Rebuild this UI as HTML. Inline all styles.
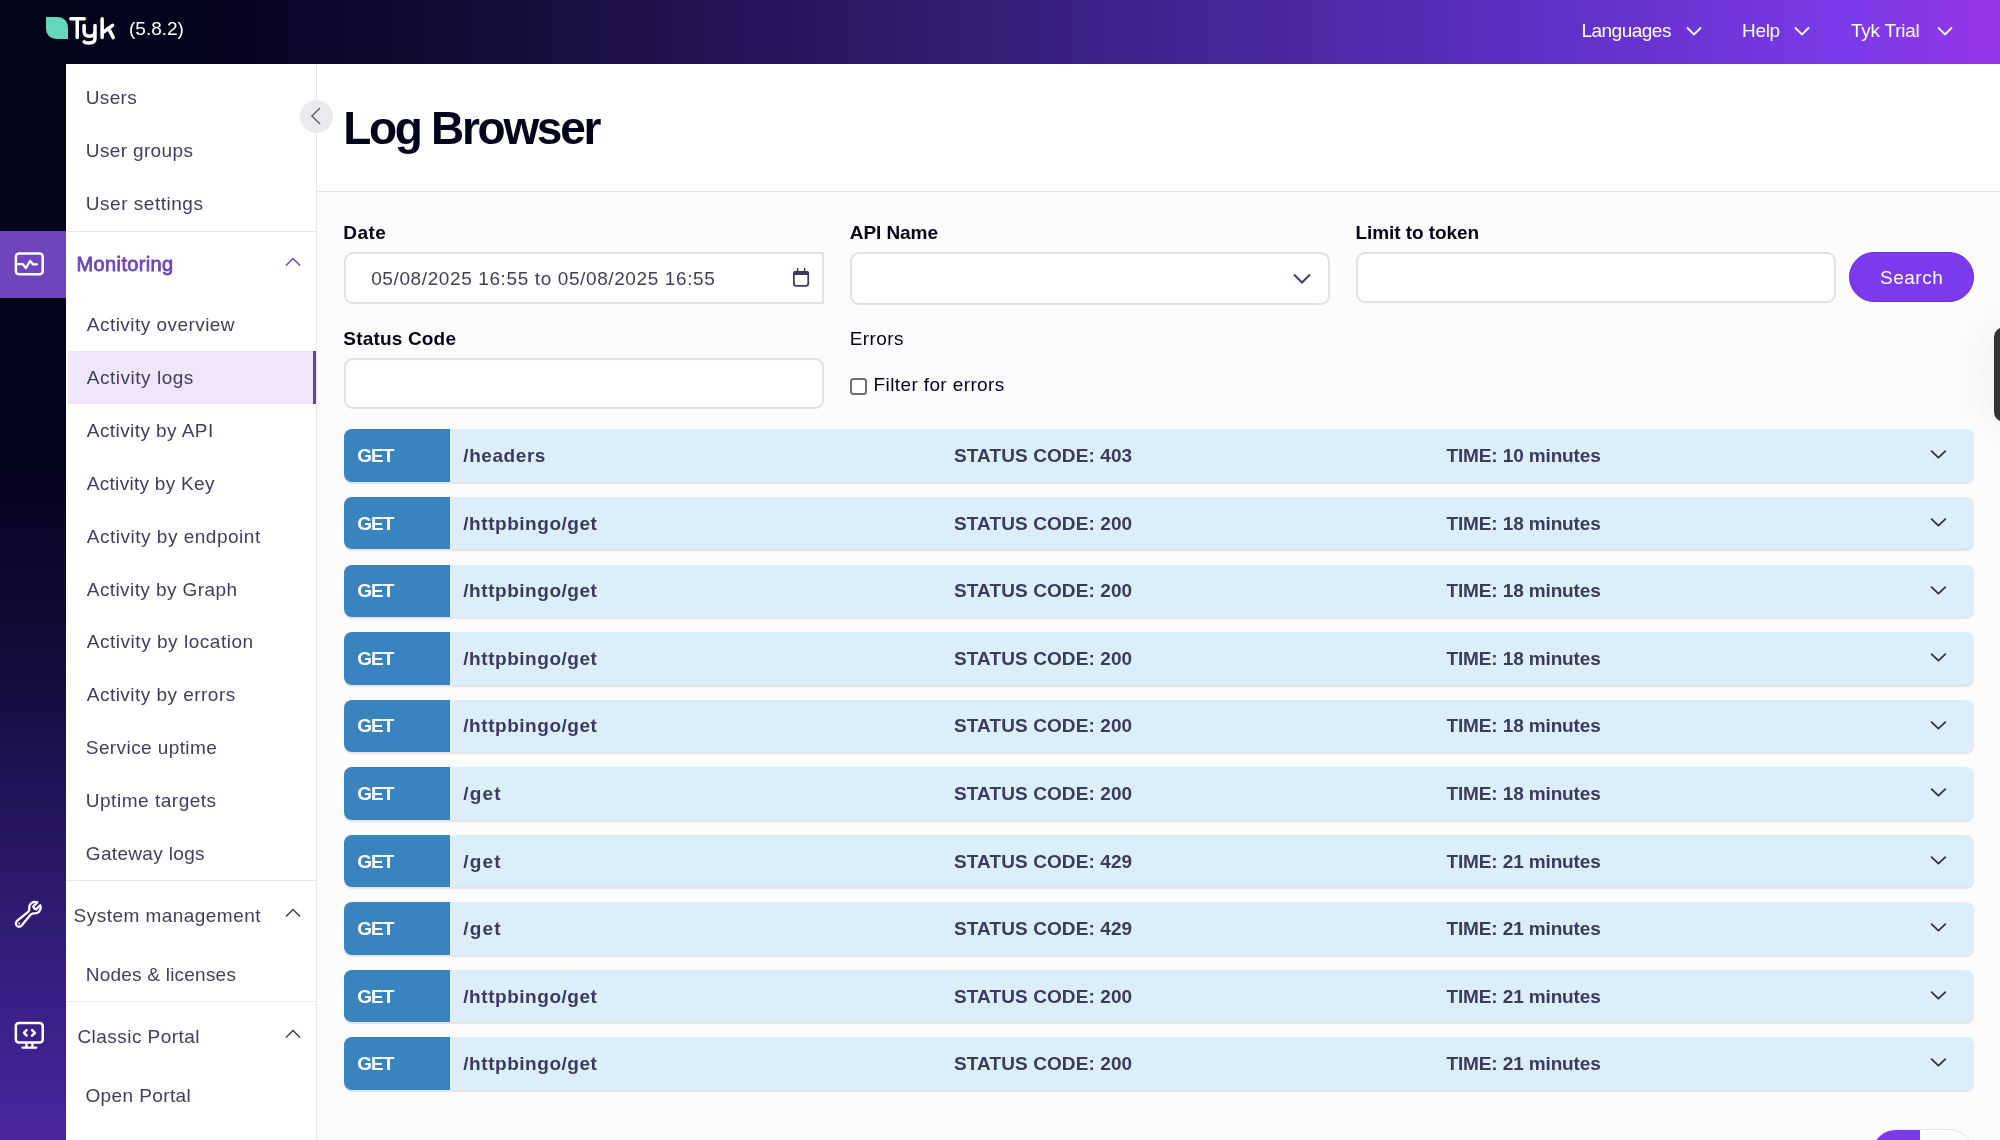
<!DOCTYPE html>
<html><head><meta charset="utf-8">
<style>
*{box-sizing:border-box;margin:0;padding:0}
html,body{width:2000px;height:1140px;overflow:hidden;background:#fcfcfd;font-family:"Liberation Sans",sans-serif}
.a{position:absolute;white-space:nowrap;line-height:1}
#tx{position:absolute;left:0;top:0;width:2000px;height:1140px;will-change:transform}
#top{position:absolute;left:0;top:0;width:2000px;height:64px;background:linear-gradient(90deg,#03031a 0%,#04031c 9%,#1b1044 30%,#391f7e 52%,#5a2fbf 75%,#7a3ae8 92%,#9535e8 100%)}
#rail{position:absolute;left:0;top:64px;width:66px;height:1076px;background:linear-gradient(180deg,#03031a 0%,#04031c 36%,#160d40 58%,#2b1a6c 76%,#4a26a0 100%)}
#side{position:absolute;left:66px;top:64px;width:251px;height:1076px;background:#fff;border-right:1.5px solid #e6e6ec}
.dv{position:absolute;left:68px;width:248px;height:1px;background:#e8e8ee}
#hdr{position:absolute;left:317px;top:64px;width:1683px;height:128px;background:#fff;border-bottom:1.5px solid #e2e2e8}
.inp{position:absolute;background:#fff;border:2px solid #e1e0e7;border-radius:9px}
.row{position:absolute;left:344px;width:1630px;height:52.5px;background:#dbeefa;border-radius:8px;box-shadow:0 1.5px 1px rgba(60,60,90,.13);overflow:hidden}
.row .b{position:absolute;left:0;top:0;width:106px;height:100%;background:#3983bf}
</style></head><body>
<div id="top"></div>
<div class="a" style="left:46px;top:17px;width:22px;height:22px;background:#64d6b9;border-radius:0 10px 0 10px"></div>
<svg class="a" style="left:64px;top:12px" width="56" height="38" viewBox="64 12 56 38"><g fill="none" stroke="#fff" stroke-width="3.5" stroke-linecap="round" stroke-linejoin="round"><path d="M70.8 18.8 H84.3 M77.25 18.8 V37.4"/><path d="M84.1 25.5 V31.2 C84.1 34.6 86.2 36.2 89.5 36.2 C92.6 36.2 95 34.6 95 31.2 M95 25.5 V38.5 C95 41.7 92.6 43 89.2 43 C86.8 43 85 42.4 84.2 41.8"/><path d="M102.15 18.8 V37.5 M103.5 32 L112.6 25.3 M109.2 29.6 L113.2 37.6"/></g></svg>
<svg class="a" style="left:1686px;top:26px" width="16" height="10" viewBox="0 0 16 10"><path d="M1 1.5 L8 8.5 L15 1.5" fill="none" stroke="#fff" stroke-width="1.8"/></svg>
<svg class="a" style="left:1794px;top:26px" width="16" height="10" viewBox="0 0 16 10"><path d="M1 1.5 L8 8.5 L15 1.5" fill="none" stroke="#fff" stroke-width="1.8"/></svg>
<svg class="a" style="left:1937px;top:26px" width="16" height="10" viewBox="0 0 16 10"><path d="M1 1.5 L8 8.5 L15 1.5" fill="none" stroke="#fff" stroke-width="1.8"/></svg>
<div id="rail"></div>
<div class="a" style="left:0;top:231px;width:66px;height:67px;background:#6f45bd"></div>
<svg class="a" style="left:13px;top:251px" width="33" height="26" viewBox="0 0 33 26"><rect x="2.9" y="2.6" width="26.8" height="20.6" rx="3" fill="none" stroke="#fff" stroke-width="2.5"/><path d="M3 13.2 H9.8 L12.9 17 L17.2 9.9 L19.9 13.3 H24" fill="none" stroke="#fff" stroke-width="2.3" stroke-linejoin="round" stroke-linecap="round"/></svg>
<svg class="a" style="left:12.5px;top:899.1px" width="30.6" height="30.6" viewBox="0 0 24 24"><path d="M21.75 6.75a4.5 4.5 0 01-4.884 4.484c-1.076-.091-2.264.071-2.95.904l-7.152 8.684a2.548 2.548 0 11-3.586-3.586l8.684-7.152c.833-.686.995-1.874.904-2.95a4.5 4.5 0 016.336-4.486l-3.276 3.276a3.004 3.004 0 002.25 2.25l3.276-3.276c.256.565.398 1.192.398 1.852z" fill="none" stroke="#fff" stroke-width="1.8" stroke-linecap="round" stroke-linejoin="round"/><path d="M4.867 19.125h.008v.008h-.008v-.008z" stroke="#fff" stroke-width="1.2"/></svg>
<svg class="a" style="left:13px;top:1021px" width="33" height="30" viewBox="0 0 33 30"><rect x="2.85" y="2.05" width="26.9" height="19.5" rx="3" fill="none" stroke="#fff" stroke-width="2.5"/><path d="M13.6 9.2 L11 11.9 L13.6 14.6 M19.1 9.2 L21.9 11.9 L19.1 14.6" fill="none" stroke="#fff" stroke-width="2.5" stroke-linecap="round" stroke-linejoin="round"/><path d="M13.4 22 V26 M19.4 22 V26" fill="none" stroke="#fff" stroke-width="2.4"/><path d="M9.6 26.6 H23.1" fill="none" stroke="#fff" stroke-width="2.4" stroke-linecap="round"/></svg>
<div id="side"></div>
<div class="dv" style="top:230.5px;left:68px;width:248px"></div>
<div class="dv" style="top:880px;left:66px;width:250px"></div>
<div class="dv" style="top:1001px;left:66px;width:250px"></div>
<div class="a" style="left:68px;top:351px;width:248px;height:52.5px;background:#efe6fa;border-right:3px solid #6342ad"></div>
<svg class="a" style="left:285px;top:257px" width="16" height="10" viewBox="0 0 16 10"><path d="M1 8.5 L8 1.5 L15 8.5" fill="none" stroke="#6d45bb" stroke-width="1.5"/></svg>
<svg class="a" style="left:285px;top:908px" width="16" height="10" viewBox="0 0 16 10"><path d="M1 8.5 L8 1.5 L15 8.5" fill="none" stroke="#3e3f5a" stroke-width="1.5"/></svg>
<svg class="a" style="left:285px;top:1029px" width="16" height="10" viewBox="0 0 16 10"><path d="M1 8.5 L8 1.5 L15 8.5" fill="none" stroke="#3e3f5a" stroke-width="1.5"/></svg>
<div id="hdr"></div>
<div class="a" style="left:300px;top:100px;width:33px;height:33px;border-radius:50%;background:#ebebef"></div>
<svg class="a" style="left:309px;top:106px" width="14" height="20" viewBox="0 0 14 20"><path d="M11 2 L3 10 L11 18" fill="none" stroke="#6a6a72" stroke-width="1.6"/></svg>
<div class="inp" style="left:344px;top:252px;width:480px;height:52px;border-radius:9px 0 0 9px"></div>
<svg class="a" style="left:792px;top:267px" width="19" height="21" viewBox="0 0 19 21"><rect x="1.875" y="4.8" width="14.35" height="14.05" rx="2.3" fill="none" stroke="#3b3b58" stroke-width="1.75"/><path d="M1 8.1 V6.3 A2.4 2.4 0 0 1 3.4 3.9 H14.7 A2.4 2.4 0 0 1 17.1 6.3 V8.1 Z" fill="#3b3b58"/><path d="M5.6 1.6 V4.5 M12.6 1.6 V4.5" stroke="#3b3b58" stroke-width="1.5" stroke-linecap="round"/></svg>
<div class="inp" style="left:850px;top:252px;width:480px;height:53px"></div>
<svg class="a" style="left:1293px;top:273px" width="18" height="12" viewBox="0 0 18 12"><path d="M1 1.5 L9 9.5 L17 1.5" fill="none" stroke="#3e3f5a" stroke-width="2"/></svg>
<div class="inp" style="left:1356px;top:252px;width:480px;height:51px"></div>
<div class="a" style="left:1849px;top:252px;width:125px;height:50px;border-radius:25px;background:#7c3aed;border:1px solid #6b30d8"></div>
<div class="inp" style="left:344px;top:358px;width:480px;height:51px"></div>
<div class="a" style="left:850px;top:378px;width:17px;height:17px;border:2px solid #6e6e76;border-radius:3.5px;background:#fff"></div>
<div class="a" style="left:1871px;top:1129px;width:103px;height:50px;border-radius:25px;background:#fff;border:1.5px solid #e6e6eb;overflow:hidden"><div style="position:absolute;left:-1.5px;top:-1.5px;width:49.5px;height:52px;background:#7c3aed"></div></div>
<div class="a" style="left:1994px;top:327px;width:20px;height:95px;border-radius:10px;background:#333;box-shadow:0 0 45px 6px rgba(0,0,0,.07)"></div>
<div class="row" style="top:429.40px"><div class="b"></div></div>
<svg class="a" style="left:1930px;top:449.4px" width="17" height="11" viewBox="0 0 17 11"><path d="M1.6 2.1 L8.4 8.7 L15.3 2.1" fill="none" stroke="#2d3047" stroke-width="1.75" stroke-linecap="round" stroke-linejoin="round"/></svg>
<div class="row" style="top:496.95px"><div class="b"></div></div>
<svg class="a" style="left:1930px;top:517.0px" width="17" height="11" viewBox="0 0 17 11"><path d="M1.6 2.1 L8.4 8.7 L15.3 2.1" fill="none" stroke="#2d3047" stroke-width="1.75" stroke-linecap="round" stroke-linejoin="round"/></svg>
<div class="row" style="top:564.50px"><div class="b"></div></div>
<svg class="a" style="left:1930px;top:584.5px" width="17" height="11" viewBox="0 0 17 11"><path d="M1.6 2.1 L8.4 8.7 L15.3 2.1" fill="none" stroke="#2d3047" stroke-width="1.75" stroke-linecap="round" stroke-linejoin="round"/></svg>
<div class="row" style="top:632.05px"><div class="b"></div></div>
<svg class="a" style="left:1930px;top:652.0px" width="17" height="11" viewBox="0 0 17 11"><path d="M1.6 2.1 L8.4 8.7 L15.3 2.1" fill="none" stroke="#2d3047" stroke-width="1.75" stroke-linecap="round" stroke-linejoin="round"/></svg>
<div class="row" style="top:699.60px"><div class="b"></div></div>
<svg class="a" style="left:1930px;top:719.6px" width="17" height="11" viewBox="0 0 17 11"><path d="M1.6 2.1 L8.4 8.7 L15.3 2.1" fill="none" stroke="#2d3047" stroke-width="1.75" stroke-linecap="round" stroke-linejoin="round"/></svg>
<div class="row" style="top:767.15px"><div class="b"></div></div>
<svg class="a" style="left:1930px;top:787.1px" width="17" height="11" viewBox="0 0 17 11"><path d="M1.6 2.1 L8.4 8.7 L15.3 2.1" fill="none" stroke="#2d3047" stroke-width="1.75" stroke-linecap="round" stroke-linejoin="round"/></svg>
<div class="row" style="top:834.70px"><div class="b"></div></div>
<svg class="a" style="left:1930px;top:854.7px" width="17" height="11" viewBox="0 0 17 11"><path d="M1.6 2.1 L8.4 8.7 L15.3 2.1" fill="none" stroke="#2d3047" stroke-width="1.75" stroke-linecap="round" stroke-linejoin="round"/></svg>
<div class="row" style="top:902.25px"><div class="b"></div></div>
<svg class="a" style="left:1930px;top:922.2px" width="17" height="11" viewBox="0 0 17 11"><path d="M1.6 2.1 L8.4 8.7 L15.3 2.1" fill="none" stroke="#2d3047" stroke-width="1.75" stroke-linecap="round" stroke-linejoin="round"/></svg>
<div class="row" style="top:969.80px"><div class="b"></div></div>
<svg class="a" style="left:1930px;top:989.8px" width="17" height="11" viewBox="0 0 17 11"><path d="M1.6 2.1 L8.4 8.7 L15.3 2.1" fill="none" stroke="#2d3047" stroke-width="1.75" stroke-linecap="round" stroke-linejoin="round"/></svg>
<div class="row" style="top:1037.35px"><div class="b"></div></div>
<svg class="a" style="left:1930px;top:1057.3px" width="17" height="11" viewBox="0 0 17 11"><path d="M1.6 2.1 L8.4 8.7 L15.3 2.1" fill="none" stroke="#2d3047" stroke-width="1.75" stroke-linecap="round" stroke-linejoin="round"/></svg>
<div id="tx"><div class="a" style="left:129.0px;top:19.2px;font-size:19px;font-weight:400;color:#fff;letter-spacing:0.00px">(5.8.2)</div>
<div class="a" style="left:1581.4px;top:20.5px;font-size:19px;font-weight:400;color:#fff;letter-spacing:-0.50px">Languages</div>
<div class="a" style="left:1742.0px;top:20.5px;font-size:19px;font-weight:400;color:#fff;letter-spacing:-0.33px">Help</div>
<div class="a" style="left:1851.0px;top:20.5px;font-size:19px;font-weight:400;color:#fff;letter-spacing:-0.25px">Tyk Trial</div>
<div class="a" style="left:85.8px;top:87.8px;font-size:19px;font-weight:400;color:#3e3f5a;letter-spacing:0.32px">Users</div>
<div class="a" style="left:85.8px;top:140.6px;font-size:19px;font-weight:400;color:#3e3f5a;letter-spacing:0.36px">User groups</div>
<div class="a" style="left:85.8px;top:193.5px;font-size:19px;font-weight:400;color:#3e3f5a;letter-spacing:0.52px">User settings</div>
<div class="a" style="left:76.6px;top:254.3px;font-size:20px;font-weight:400;color:#6d45bb;letter-spacing:0.36px;-webkit-text-stroke:0.8px #6d45bb">Monitoring</div>
<div class="a" style="left:86.8px;top:314.8px;font-size:19px;font-weight:400;color:#3e3f5a;letter-spacing:0.46px">Activity overview</div>
<div class="a" style="left:86.8px;top:367.7px;font-size:19px;font-weight:400;color:#3e3f5a;letter-spacing:0.52px">Activity logs</div>
<div class="a" style="left:86.8px;top:420.7px;font-size:19px;font-weight:400;color:#3e3f5a;letter-spacing:0.43px">Activity by API</div>
<div class="a" style="left:86.8px;top:473.6px;font-size:19px;font-weight:400;color:#3e3f5a;letter-spacing:0.29px">Activity by Key</div>
<div class="a" style="left:86.8px;top:526.5px;font-size:19px;font-weight:400;color:#3e3f5a;letter-spacing:0.51px">Activity by endpoint</div>
<div class="a" style="left:86.8px;top:579.5px;font-size:19px;font-weight:400;color:#3e3f5a;letter-spacing:0.41px">Activity by Graph</div>
<div class="a" style="left:86.8px;top:632.4px;font-size:19px;font-weight:400;color:#3e3f5a;letter-spacing:0.53px">Activity by location</div>
<div class="a" style="left:86.8px;top:685.3px;font-size:19px;font-weight:400;color:#3e3f5a;letter-spacing:0.47px">Activity by errors</div>
<div class="a" style="left:85.8px;top:738.3px;font-size:19px;font-weight:400;color:#3e3f5a;letter-spacing:0.41px">Service uptime</div>
<div class="a" style="left:85.8px;top:791.2px;font-size:19px;font-weight:400;color:#3e3f5a;letter-spacing:0.52px">Uptime targets</div>
<div class="a" style="left:85.8px;top:844.1px;font-size:19px;font-weight:400;color:#3e3f5a;letter-spacing:0.33px">Gateway logs</div>
<div class="a" style="left:73.6px;top:905.5px;font-size:19px;font-weight:400;color:#3e3f5a;letter-spacing:0.46px">System management</div>
<div class="a" style="left:85.8px;top:964.8px;font-size:19px;font-weight:400;color:#3e3f5a;letter-spacing:0.22px">Nodes &amp; licenses</div>
<div class="a" style="left:77.4px;top:1026.8px;font-size:19px;font-weight:400;color:#3e3f5a;letter-spacing:0.46px">Classic Portal</div>
<div class="a" style="left:85.4px;top:1085.8px;font-size:19px;font-weight:400;color:#3e3f5a;letter-spacing:0.40px">Open Portal</div>
<div class="a" style="left:343.2px;top:104.7px;font-size:46px;font-weight:700;color:#03031a;letter-spacing:-2.30px">Log Browser</div>
<div class="a" style="left:343.3px;top:223.1px;font-size:19px;font-weight:700;color:#03031a;letter-spacing:0.47px">Date</div>
<div class="a" style="left:849.8px;top:223.1px;font-size:19px;font-weight:700;color:#03031a;letter-spacing:-0.07px">API Name</div>
<div class="a" style="left:1355.5px;top:223.0px;font-size:19px;font-weight:700;color:#03031a;letter-spacing:-0.08px">Limit to token</div>
<div class="a" style="left:343.3px;top:329.3px;font-size:19px;font-weight:700;color:#03031a;letter-spacing:0.18px">Status Code</div>
<div class="a" style="left:849.8px;top:329.3px;font-size:19px;font-weight:400;color:#03031a;letter-spacing:0.40px">Errors</div>
<div class="a" style="left:873.6px;top:374.9px;font-size:19px;font-weight:400;color:#03031a;letter-spacing:0.38px">Filter for errors</div>
<div class="a" style="left:371.2px;top:268.9px;font-size:19px;font-weight:400;color:#3e3f5a;letter-spacing:0.61px">05/08/2025 16:55 to 05/08/2025 16:55</div>
<div class="a" style="left:1880.0px;top:267.9px;font-size:19px;font-weight:400;color:#fff;letter-spacing:0.52px">Search</div>
<div class="a" style="left:357.3px;top:446.2px;font-size:19px;font-weight:700;color:#fff;letter-spacing:-1.00px">GET</div>
<div class="a" style="left:463.3px;top:446.2px;font-size:19px;font-weight:700;color:#3b3b5c;letter-spacing:0.57px">/headers</div>
<div class="a" style="left:954.0px;top:446.2px;font-size:19px;font-weight:700;color:#3b3b5c;letter-spacing:0.10px">STATUS CODE: 403</div>
<div class="a" style="left:1446.5px;top:446.2px;font-size:19px;font-weight:700;color:#3b3b5c;letter-spacing:-0.13px">TIME: 10 minutes</div>
<div class="a" style="left:357.3px;top:513.8px;font-size:19px;font-weight:700;color:#fff;letter-spacing:-1.00px">GET</div>
<div class="a" style="left:463.3px;top:513.8px;font-size:19px;font-weight:700;color:#3b3b5c;letter-spacing:0.54px">/httpbingo/get</div>
<div class="a" style="left:954.0px;top:513.8px;font-size:19px;font-weight:700;color:#3b3b5c;letter-spacing:0.10px">STATUS CODE: 200</div>
<div class="a" style="left:1446.5px;top:513.8px;font-size:19px;font-weight:700;color:#3b3b5c;letter-spacing:-0.13px">TIME: 18 minutes</div>
<div class="a" style="left:357.3px;top:581.3px;font-size:19px;font-weight:700;color:#fff;letter-spacing:-1.00px">GET</div>
<div class="a" style="left:463.3px;top:581.3px;font-size:19px;font-weight:700;color:#3b3b5c;letter-spacing:0.54px">/httpbingo/get</div>
<div class="a" style="left:954.0px;top:581.3px;font-size:19px;font-weight:700;color:#3b3b5c;letter-spacing:0.10px">STATUS CODE: 200</div>
<div class="a" style="left:1446.5px;top:581.3px;font-size:19px;font-weight:700;color:#3b3b5c;letter-spacing:-0.13px">TIME: 18 minutes</div>
<div class="a" style="left:357.3px;top:648.9px;font-size:19px;font-weight:700;color:#fff;letter-spacing:-1.00px">GET</div>
<div class="a" style="left:463.3px;top:648.9px;font-size:19px;font-weight:700;color:#3b3b5c;letter-spacing:0.54px">/httpbingo/get</div>
<div class="a" style="left:954.0px;top:648.9px;font-size:19px;font-weight:700;color:#3b3b5c;letter-spacing:0.10px">STATUS CODE: 200</div>
<div class="a" style="left:1446.5px;top:648.9px;font-size:19px;font-weight:700;color:#3b3b5c;letter-spacing:-0.13px">TIME: 18 minutes</div>
<div class="a" style="left:357.3px;top:716.4px;font-size:19px;font-weight:700;color:#fff;letter-spacing:-1.00px">GET</div>
<div class="a" style="left:463.3px;top:716.4px;font-size:19px;font-weight:700;color:#3b3b5c;letter-spacing:0.54px">/httpbingo/get</div>
<div class="a" style="left:954.0px;top:716.4px;font-size:19px;font-weight:700;color:#3b3b5c;letter-spacing:0.10px">STATUS CODE: 200</div>
<div class="a" style="left:1446.5px;top:716.4px;font-size:19px;font-weight:700;color:#3b3b5c;letter-spacing:-0.13px">TIME: 18 minutes</div>
<div class="a" style="left:357.3px;top:784.0px;font-size:19px;font-weight:700;color:#fff;letter-spacing:-1.00px">GET</div>
<div class="a" style="left:463.3px;top:784.0px;font-size:19px;font-weight:700;color:#3b3b5c;letter-spacing:1.17px">/get</div>
<div class="a" style="left:954.0px;top:784.0px;font-size:19px;font-weight:700;color:#3b3b5c;letter-spacing:0.10px">STATUS CODE: 200</div>
<div class="a" style="left:1446.5px;top:784.0px;font-size:19px;font-weight:700;color:#3b3b5c;letter-spacing:-0.13px">TIME: 18 minutes</div>
<div class="a" style="left:357.3px;top:851.5px;font-size:19px;font-weight:700;color:#fff;letter-spacing:-1.00px">GET</div>
<div class="a" style="left:463.3px;top:851.5px;font-size:19px;font-weight:700;color:#3b3b5c;letter-spacing:1.17px">/get</div>
<div class="a" style="left:954.0px;top:851.5px;font-size:19px;font-weight:700;color:#3b3b5c;letter-spacing:0.10px">STATUS CODE: 429</div>
<div class="a" style="left:1446.5px;top:851.5px;font-size:19px;font-weight:700;color:#3b3b5c;letter-spacing:-0.13px">TIME: 21 minutes</div>
<div class="a" style="left:357.3px;top:919.1px;font-size:19px;font-weight:700;color:#fff;letter-spacing:-1.00px">GET</div>
<div class="a" style="left:463.3px;top:919.1px;font-size:19px;font-weight:700;color:#3b3b5c;letter-spacing:1.17px">/get</div>
<div class="a" style="left:954.0px;top:919.1px;font-size:19px;font-weight:700;color:#3b3b5c;letter-spacing:0.10px">STATUS CODE: 429</div>
<div class="a" style="left:1446.5px;top:919.1px;font-size:19px;font-weight:700;color:#3b3b5c;letter-spacing:-0.13px">TIME: 21 minutes</div>
<div class="a" style="left:357.3px;top:986.6px;font-size:19px;font-weight:700;color:#fff;letter-spacing:-1.00px">GET</div>
<div class="a" style="left:463.3px;top:986.6px;font-size:19px;font-weight:700;color:#3b3b5c;letter-spacing:0.54px">/httpbingo/get</div>
<div class="a" style="left:954.0px;top:986.6px;font-size:19px;font-weight:700;color:#3b3b5c;letter-spacing:0.10px">STATUS CODE: 200</div>
<div class="a" style="left:1446.5px;top:986.6px;font-size:19px;font-weight:700;color:#3b3b5c;letter-spacing:-0.13px">TIME: 21 minutes</div>
<div class="a" style="left:357.3px;top:1054.2px;font-size:19px;font-weight:700;color:#fff;letter-spacing:-1.00px">GET</div>
<div class="a" style="left:463.3px;top:1054.2px;font-size:19px;font-weight:700;color:#3b3b5c;letter-spacing:0.54px">/httpbingo/get</div>
<div class="a" style="left:954.0px;top:1054.2px;font-size:19px;font-weight:700;color:#3b3b5c;letter-spacing:0.10px">STATUS CODE: 200</div>
<div class="a" style="left:1446.5px;top:1054.2px;font-size:19px;font-weight:700;color:#3b3b5c;letter-spacing:-0.13px">TIME: 21 minutes</div></div>
</body></html>
